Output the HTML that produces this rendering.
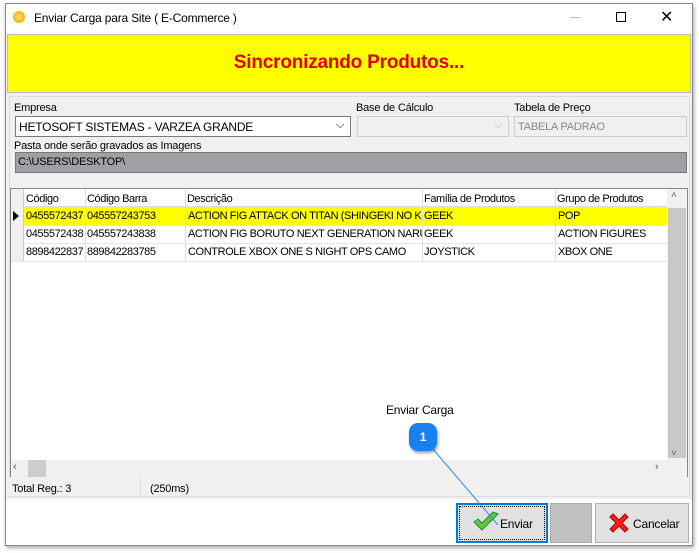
<!DOCTYPE html>
<html><head><meta charset="utf-8"><style>
*{box-sizing:border-box;margin:0;padding:0}
body{width:699px;height:553px;background:#fff;font-family:"Liberation Sans",sans-serif;font-size:11px;color:#000;position:relative;overflow:hidden;letter-spacing:-0.2px}
.a{position:absolute}
.win{left:5px;top:3px;width:688px;height:543px;border:1px solid #888;background:#f0f0f0;box-shadow:1px 2px 4px rgba(0,0,0,.35)}
.cell{position:absolute;white-space:nowrap;overflow:hidden;line-height:18px;padding-left:2px;letter-spacing:-0.4px}
</style></head><body>
<div class="a win"></div>
<div class="a" style="left:6px;top:4px;width:686px;height:30px;background:#fff"></div>
<div class="a" style="left:13px;top:11px;width:12px;height:12px;border-radius:50%;background:radial-gradient(#ffe060,#f0a000)"></div>
<div class="a" style="left:34px;top:11px;font-size:12px">Enviar Carga para Site ( E-Commerce )</div>
<div class="a" style="left:570px;top:17px;width:10px;height:1px;background:#bbb"></div>
<div class="a" style="left:616px;top:12px;width:10px;height:10px;border:1px solid #000"></div>
<div class="a" style="left:660px;top:7px;font-size:16px">✕</div>
<div class="a" style="left:7px;top:34px;width:684px;height:59px;background:#ffff00;border:1px solid #bbb"></div>
<div class="a" style="left:7px;top:52px;width:684px;text-align:center;font-size:19px;font-weight:bold;color:#e00000">Sincronizando Produtos...</div>
<div class="a" style="left:9px;top:96px;width:681px;height:405px;border:1px solid #ddd"></div>
<div class="a" style="left:14px;top:102px">Empresa</div>
<div class="a" style="left:15px;top:116px;width:336px;height:21px;background:#fff;border:1px solid #7a7a7a;padding:3px 3px;font-size:12px">HETOSOFT SISTEMAS - VARZEA GRANDE</div>
<div class="a" style="left:336px;top:119px;font-size:11px">⌵</div>
<div class="a" style="left:356px;top:102px">Base de Cálculo</div>
<div class="a" style="left:357px;top:116px;width:152px;height:21px;background:#f0f0f0;border:1px solid #ccc"></div>
<div class="a" style="left:494px;top:119px;color:#aaa">⌵</div>
<div class="a" style="left:514px;top:102px">Tabela de Preço</div>
<div class="a" style="left:514px;top:116px;width:173px;height:21px;background:#f0f0f0;border:1px solid #ccc;padding:4px 3px;color:#888">TABELA PADRAO</div>
<div class="a" style="left:14px;top:140px">Pasta onde serão gravados as Imagens</div>
<div class="a" style="left:15px;top:152px;width:672px;height:21px;background:#a0a0a4;border:1px solid #777;padding:3px 2px">C:\USERS\DESKTOP\</div>
<div class="a" style="left:10px;top:188px;width:678px;height:290px;background:#fff;border:1px solid #888"></div>
<div class="a" style="left:11px;top:189px;width:656px;height:18px;background:#fff;border-bottom:1px solid #ddd"></div>
<div class="a" style="left:11px;top:189px;width:13px;height:72px;background:#f0f0f0;border-right:1px solid #ccc"></div>
<div class="a" style="left:13px;top:211px;width:0;height:0;border-left:6px solid #000;border-top:5px solid transparent;border-bottom:5px solid transparent"></div>
<div class="a" style="left:24px;top:207px;width:643px;height:18px;background:#ffff00"></div>
<div class="a" style="left:24px;top:243px;width:643px;border-top:1px solid #e4e4e4"></div>
<div class="a" style="left:24px;top:225px;width:643px;border-top:1px solid #e4e4e4"></div>
<div class="a" style="left:11px;top:261px;width:656px;border-top:1px solid #e4e4e4"></div>
<div class="a" style="left:85px;top:189px;height:72px;border-left:1px solid #ddd"></div>
<div class="a" style="left:185px;top:189px;height:72px;border-left:1px solid #ddd"></div>
<div class="a" style="left:422px;top:189px;height:72px;border-left:1px solid #ddd"></div>
<div class="a" style="left:555px;top:189px;height:72px;border-left:1px solid #ddd"></div>
<div class="cell" style="left:24px;top:190px;width:61px">Código</div>
<div class="cell" style="left:85px;top:190px;width:100px">Código Barra</div>
<div class="cell" style="left:185px;top:190px;width:237px">Descrição</div>
<div class="cell" style="left:422px;top:190px;width:133px">Família de Produtos</div>
<div class="cell" style="left:555px;top:190px;width:112px">Grupo de Produtos</div>
<div class="cell" style="left:24px;top:207px;width:61px">0455572437</div>
<div class="cell" style="left:85px;top:207px;width:100px">045557243753</div>
<div class="cell" style="left:186px;top:207px;width:236px">ACTION FIG ATTACK ON TITAN (SHINGEKI NO KYOJIN)</div>
<div class="cell" style="left:422px;top:207px;width:133px">GEEK</div>
<div class="cell" style="left:556px;top:207px;width:111px">POP</div>
<div class="cell" style="left:24px;top:225px;width:61px">0455572438</div>
<div class="cell" style="left:85px;top:225px;width:100px">045557243838</div>
<div class="cell" style="left:186px;top:225px;width:236px">ACTION FIG BORUTO NEXT GENERATION NARUTO</div>
<div class="cell" style="left:422px;top:225px;width:133px">GEEK</div>
<div class="cell" style="left:556px;top:225px;width:111px">ACTION FIGURES</div>
<div class="cell" style="left:24px;top:243px;width:61px">8898422837</div>
<div class="cell" style="left:85px;top:243px;width:100px">889842283785</div>
<div class="cell" style="left:186px;top:243px;width:236px">CONTROLE XBOX ONE S NIGHT OPS CAMO</div>
<div class="cell" style="left:422px;top:243px;width:133px">JOYSTICK</div>
<div class="cell" style="left:556px;top:243px;width:111px">XBOX ONE</div>
<div class="a" style="left:667px;top:189px;width:20px;height:271px;background:#f0f0f0"></div>
<div class="a" style="left:668px;top:208px;width:18px;height:250px;background:#c8c8c8"></div>
<div class="a" style="left:671px;top:190px;color:#666;font-size:10px">˄</div>
<div class="a" style="left:671px;top:448px;color:#666;font-size:10px">˅</div>
<div class="a" style="left:11px;top:460px;width:676px;height:17px;background:#f0f0f0"></div>
<div class="a" style="left:28px;top:460px;width:18px;height:17px;background:#cdcdcd"></div>
<div class="a" style="left:13px;top:461px;color:#555">‹</div>
<div class="a" style="left:655px;top:461px;color:#555">›</div>
<div class="a" style="left:8px;top:477px;width:680px;height:20px;background:#f0f0f0;border-bottom:1px solid #ddd"></div>
<div class="a" style="left:140px;top:478px;height:19px;border-left:1px solid #ddd"></div>
<div class="a" style="left:12px;top:483px">Total Reg.: 3</div>
<div class="a" style="left:150px;top:483px">(250ms)</div>
<div class="a" style="left:6px;top:499px;width:686px;height:46px;background:#fff"></div>
<div class="a" style="left:456px;top:503px;width:92px;height:40px;background:#e1e1e1;border:2px solid #0078d7;outline:1px dotted #000;outline-offset:-4px"></div>
<svg class="a" style="left:472px;top:510px" width="28" height="24"><path d="M2 12 L10 20 L26 4 L21 2 L10 13 L6 9 Z" fill="#5cc84a" stroke="#2e8a2a" stroke-width="1"/></svg>
<div class="a" style="left:500px;top:517px;font-size:12px">Enviar</div>
<div class="a" style="left:550px;top:503px;width:42px;height:40px;background:#c0c0c0;border:1px solid #aaa"></div>
<div class="a" style="left:595px;top:503px;width:94px;height:40px;background:#e1e1e1;border:1px solid #adadad"></div>
<svg class="a" style="left:607px;top:511px" width="24" height="24"><path d="M3 6 L6 3 L12 9 L18 3 L21 6 L15 12 L21 18 L18 21 L12 15 L6 21 L3 18 L9 12 Z" fill="#f02020" stroke="#b00000" stroke-width="1"/></svg>
<div class="a" style="left:633px;top:517px;font-size:12px">Cancelar</div>
<div class="a" style="left:386px;top:403px;font-size:12px">Enviar Carga</div>
<svg class="a" style="left:0;top:0" width="699" height="553"><line x1="432" y1="448" x2="498" y2="525" stroke="#2a8ee8" stroke-width="1"/></svg>
<div class="a" style="left:409px;top:423px;width:28px;height:28px;border-radius:9px;background:#1a7ff0;box-shadow:1px 2px 3px rgba(0,0,0,.4);color:#fff;font-weight:bold;font-size:12px;text-align:center;line-height:28px">1</div>
</body></html>
